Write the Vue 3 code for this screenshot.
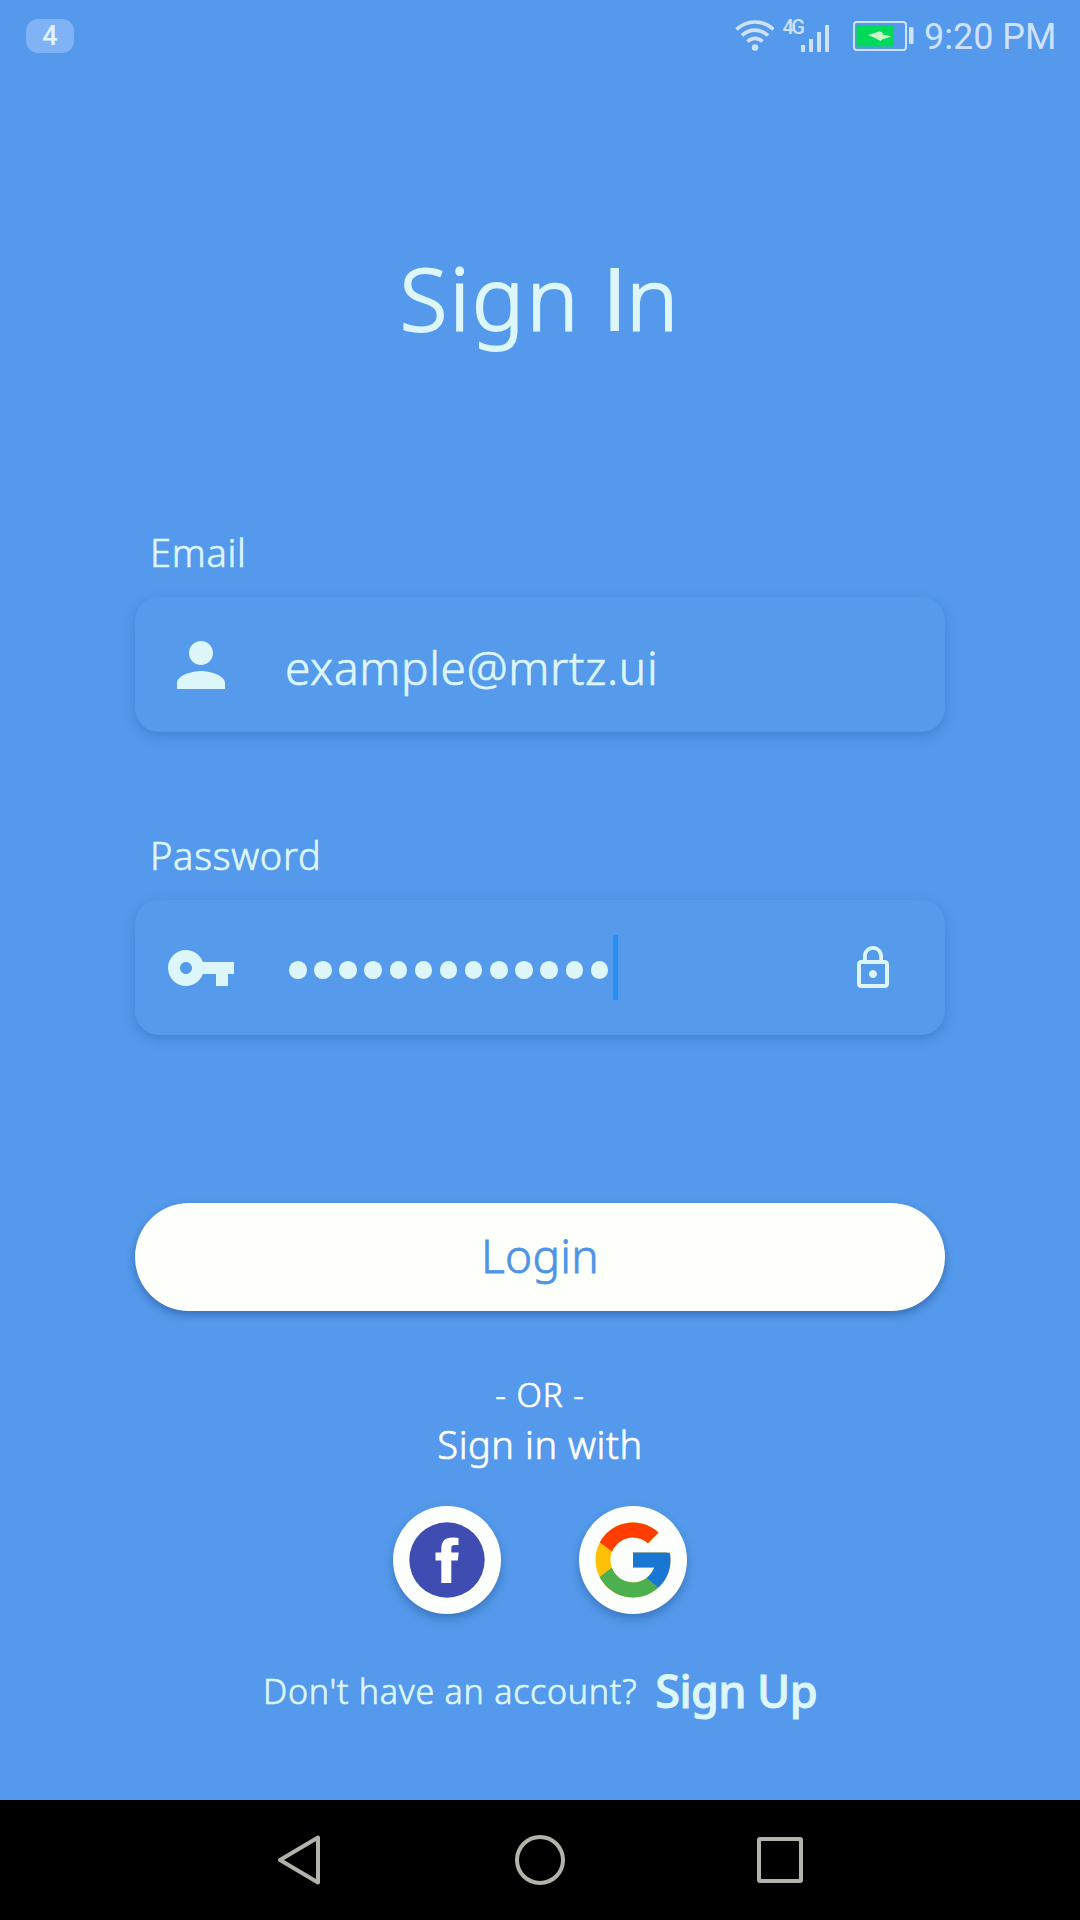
<script setup>
const maskedLength = 13
const bars = [7, 13, 20, 27]
</script>

<template>
  <div class="screen">
    <header class="status">
      <span class="badge">4</span>
      <div class="status-right">
        <svg class="wifi" width="40" height="33" viewBox="0 0 40 33" fill="none" stroke="currentColor" stroke-width="3.6">
          <path d="M2.5 10.500C13 .5 29 .5 39.500 10.500" />
          <path d="M8 16.500C15.500 9.300 26.500 9.300 34 16.500" />
          <path d="M13.500 22.500C18 18.300 24 18.300 28.500 22.500" />
          <circle cx="21" cy="28.500" r="3.200" fill="currentColor" stroke="none" />
        </svg>
        <span class="net">4G</span>
        <div class="bars">
          <i v-for="h in bars" :key="h" :style="{ height: h + 'px' }"></i>
        </div>
        <svg class="battery" width="61" height="30" viewBox="0 0 61 30">
          <rect x="1" y="1" width="52" height="28" rx="3" fill="none" stroke="currentColor" stroke-width="2" />
          <rect x="3.500" y="4.500" width="37.500" height="21" fill="#00da59" />
          <path d="M15 14L26 10.500L29 11L30 13.500L38.500 15.500L29 18.500L27.500 20L23 17.500Z" fill="#c9f7c9" />
          <rect x="56" y="6" width="4.500" height="17" rx="1" fill="currentColor" />
        </svg>
        <span class="time">9:20 PM</span>
      </div>
    </header>

    <main class="content">
      <h1 class="title">Sign <span class="plain-i">I</span>n</h1>

      <label class="label email-label">Email</label>
      <div class="field">
        <svg width="72" height="72" viewBox="0 0 24 24" fill="currentColor">
          <path d="M12 12c2.210 0 4-1.790 4-4s-1.790-4-4-4-4 1.790-4 4 1.790 4 4 4zm0 2c-2.670 0-8 1.340-8 4v2h16v-2c0-2.660-5.330-4-8-4z" />
        </svg>
        <span class="value">example@mrtz.ui</span>
      </div>

      <label class="label password-label">Password</label>
      <div class="field">
        <svg width="72" height="72" viewBox="0 0 24 24" fill="currentColor">
          <path d="M12.650 10C11.830 7.670 9.610 6 7 6c-3.310 0-6 2.690-6 6s2.690 6 6 6c2.610 0 4.830-1.670 5.650-4H17v4h4v-4h2v-4H12.650zM7 14c-1.100 0-2-.9-2-2s.9-2 2-2 2 .9 2 2-.9 2-2 2z" />
        </svg>
        <div class="mask">
          <i v-for="n in maskedLength" :key="n"></i>
        </div>
        <span class="caret"></span>
        <svg class="lock" width="48" height="48" viewBox="0 0 24 24" fill="currentColor">
          <path d="M12 17c1.100 0 2-.9 2-2s-.9-2-2-2-2 .9-2 2 .9 2 2 2zm6-9h-1V6c0-2.760-2.240-5-5-5S7 3.240 7 6v2H6c-1.100 0-2 .9-2 2v10c0 1.100.9 2 2 2h12c1.100 0 2-.9 2-2V10c0-1.100-.9-2-2-2zM8.900 6c0-1.710 1.390-3.100 3.100-3.100s3.100 1.390 3.100 3.100v2H8.900V6zM18 20H6V10h12v10z" />
        </svg>
      </div>

      <button class="login">Login</button>

      <p class="or">- OR -</p>
      <p class="with">Sign in with</p>

      <div class="socials">
        <div class="social">
          <svg width="76" height="76" viewBox="0 0 76 76">
            <circle cx="38" cy="38" r="37.700" fill="#3f4db3" />
            <path fill="#fff" d="M32.300 61V38.500H26.500V30.500H32.300V27.500C32.300 19 36 15.500 43.500 15.500C46.300 15.500 48 15.700 49.500 16V23H46C43 23 42.300 24.300 42.300 27V30.500H49.700L48.800 38.500H42.300V61Z" />
          </svg>
        </div>
        <div class="social">
          <svg width="90" height="90" viewBox="0 0 48 48">
            <path fill="#ffc107" d="M43.611 20.083H42V20H24v8h11.303c-1.649 4.657-6.080 8-11.303 8-6.627 0-12-5.373-12-12s5.373-12 12-12c3.059 0 5.842 1.154 7.961 3.039l5.657-5.657C34.046 6.053 29.268 4 24 4 12.955 4 4 12.955 4 24s8.955 20 20 20 20-8.955 20-20c0-1.341-.138-2.650-.389-3.917z" />
            <path fill="#ff3d00" d="M6.306 14.691l6.571 4.819C14.655 15.108 18.961 12 24 12c3.059 0 5.842 1.154 7.961 3.039l5.657-5.657C34.046 6.053 29.268 4 24 4 16.318 4 9.656 8.337 6.306 14.691z" />
            <path fill="#4caf50" d="M24 44c5.166 0 9.860-1.977 13.409-5.192l-6.190-5.238C29.211 35.091 26.715 36 24 36c-5.202 0-9.619-3.317-11.283-7.946l-6.522 5.025C9.505 39.556 16.227 44 24 44z" />
            <path fill="#1976d2" d="M43.611 20.083H42V20H24v8h11.303c-.792 2.237-2.231 4.166-4.087 5.571l.003-.002 6.190 5.238C36.971 39.205 44 34 44 24c0-1.341-.138-2.650-.389-3.917z" />
          </svg>
        </div>
      </div>

      <p class="signup"><span class="ask">Don't have an account?</span><b>Sign Up</b></p>
    </main>

    <nav class="nav">
      <svg width="50" height="54" viewBox="0 0 50 54"><path d="M5 27L43 4.500V49.500Z" /></svg>
      <svg width="50" height="54" viewBox="0 0 50 54"><circle cx="25" cy="27" r="23" /></svg>
      <svg width="50" height="54" viewBox="0 0 50 54"><rect x="4" y="6" width="42" height="42" rx="1" /></svg>
    </nav>
  </div>
</template>

<style>
body {
  margin: 0;
}
</style>

<style scoped>
.screen {
  width: 1080px;
  height: 1920px;
  display: flex;
  flex-direction: column;
  overflow: hidden;
  background: #5499eb;
  color: #dcf6fa;
  font-family: "Noto Sans", sans-serif;
  font-weight: 300;
}
.status {
  height: 72px;
  display: flex;
  align-items: flex-start;
  justify-content: space-between;
  color: #cfe2fb;
  font-family: Roboto, sans-serif;
  font-weight: 400;
}
.badge {
  width: 48px;
  height: 34px;
  margin: 19px 0 0 26px;
  border-radius: 12px;
  background: #7fb3f5;
  color: #e2f5ff;
  font-size: 27px;
  font-weight: 500;
  line-height: 35px;
  text-align: center;
}
.status-right {
  display: flex;
  align-items: flex-start;
}
.wifi {
  margin-top: 19px;
}
.net {
  width: 19px;
  margin: 17px 0 0 9px;
  font-size: 20px;
  font-weight: 500;
  line-height: 20px;
  letter-spacing: -2.500px;
}
.bars {
  display: flex;
  align-items: flex-end;
  gap: 3.500px;
  height: 27px;
  margin: 25px 0 0 -1px;
}
.bars i {
  width: 4.500px;
  background: currentColor;
}
.battery {
  margin: 21px 0 0 24px;
}
.time {
  width: 156px;
  margin-left: 10px;
  padding-top: 16px;
  font-size: 36px;
  line-height: 43px;
  white-space: nowrap;
}
.content {
  height: 1728px;
  padding: 0 135px;
  display: flex;
  flex-direction: column;
  -webkit-text-stroke: 0.700px currentColor;
}
p {
  margin: 0;
}
.title {
  margin: 171px 0 0;
  font-size: 87px;
  font-weight: 300;
  line-height: 108px;
  letter-spacing: 2.300px;
  word-spacing: -3px;
  text-align: center;
  -webkit-text-stroke: 2px currentColor;
}
.plain-i {
  margin: 0 -3px 0 0;
  font-family: Lato, sans-serif;
  font-weight: 400;
  line-height: 1;
  -webkit-text-stroke: 0;
}
.label {
  padding-left: 15px;
  font-size: 38px;
  line-height: 48px;
  letter-spacing: 0.700px;
}
.email-label {
  margin: 177px 0 21px;
}
.password-label {
  margin: 99px 0 21px;
}
.field {
  box-sizing: border-box;
  height: 135px;
  padding: 0 48px 0 30px;
  display: flex;
  align-items: center;
  border-radius: 24px;
  background: #569aec;
  box-shadow: 0 4px 12px rgba(20, 80, 160, 0.300);
}
.value {
  margin: 4px 0 0 48px;
  font-size: 46px;
  line-height: 60px;
  letter-spacing: 0.650px;
}
.mask {
  display: flex;
  gap: 7.650px;
  margin: 5px 0 0 52px;
}
.mask i {
  width: 17.500px;
  height: 17.500px;
  border-radius: 50%;
  background: currentColor;
}
.caret {
  width: 5px;
  height: 65px;
  margin-left: 5px;
  background: #2590f2;
}
.lock {
  margin-left: auto;
}
.login {
  height: 108px;
  margin-top: 168px;
  padding: 0 0 4px;
  border: 0;
  border-radius: 54px;
  background: #fdfffa;
  box-shadow: 0 4px 9px rgba(10, 50, 110, 0.400);
  color: #4f93e6;
  font: 300 46px/104px "Noto Sans", sans-serif;
  letter-spacing: 0.300px;
  -webkit-text-stroke: 0.800px currentColor;
}
.or,
.with {
  color: #fff;
  text-align: center;
}
.or {
  margin-top: 63px;
  font-size: 33px;
  line-height: 42px;
  letter-spacing: 1px;
}
.with {
  margin-top: 4px;
  font-size: 38px;
  line-height: 48px;
  letter-spacing: 0.550px;
}
.socials {
  margin-top: 38px;
  display: flex;
  justify-content: center;
  gap: 78px;
}
.social {
  width: 108px;
  height: 108px;
  display: flex;
  align-items: center;
  justify-content: center;
  border-radius: 50%;
  background: #fdfffc;
  box-shadow: 0 5px 10px rgba(10, 50, 110, 0.320);
}
.signup {
  margin-top: 47px;
  display: flex;
  align-items: center;
  justify-content: center;
  gap: 18px;
  line-height: 60px;
  white-space: nowrap;
}
.ask {
  font-size: 34px;
  letter-spacing: 0.750px;
}
.signup b {
  font-size: 45px;
  font-weight: 500;
  letter-spacing: -0.600px;
  -webkit-text-stroke: 1px currentColor;
}
.nav {
  height: 120px;
  display: flex;
  align-items: center;
  justify-content: center;
  gap: 190px;
  background: #000;
}
.nav svg {
  fill: none;
  stroke: #b4b3aa;
  stroke-width: 4;
  stroke-linejoin: round;
}
</style>
